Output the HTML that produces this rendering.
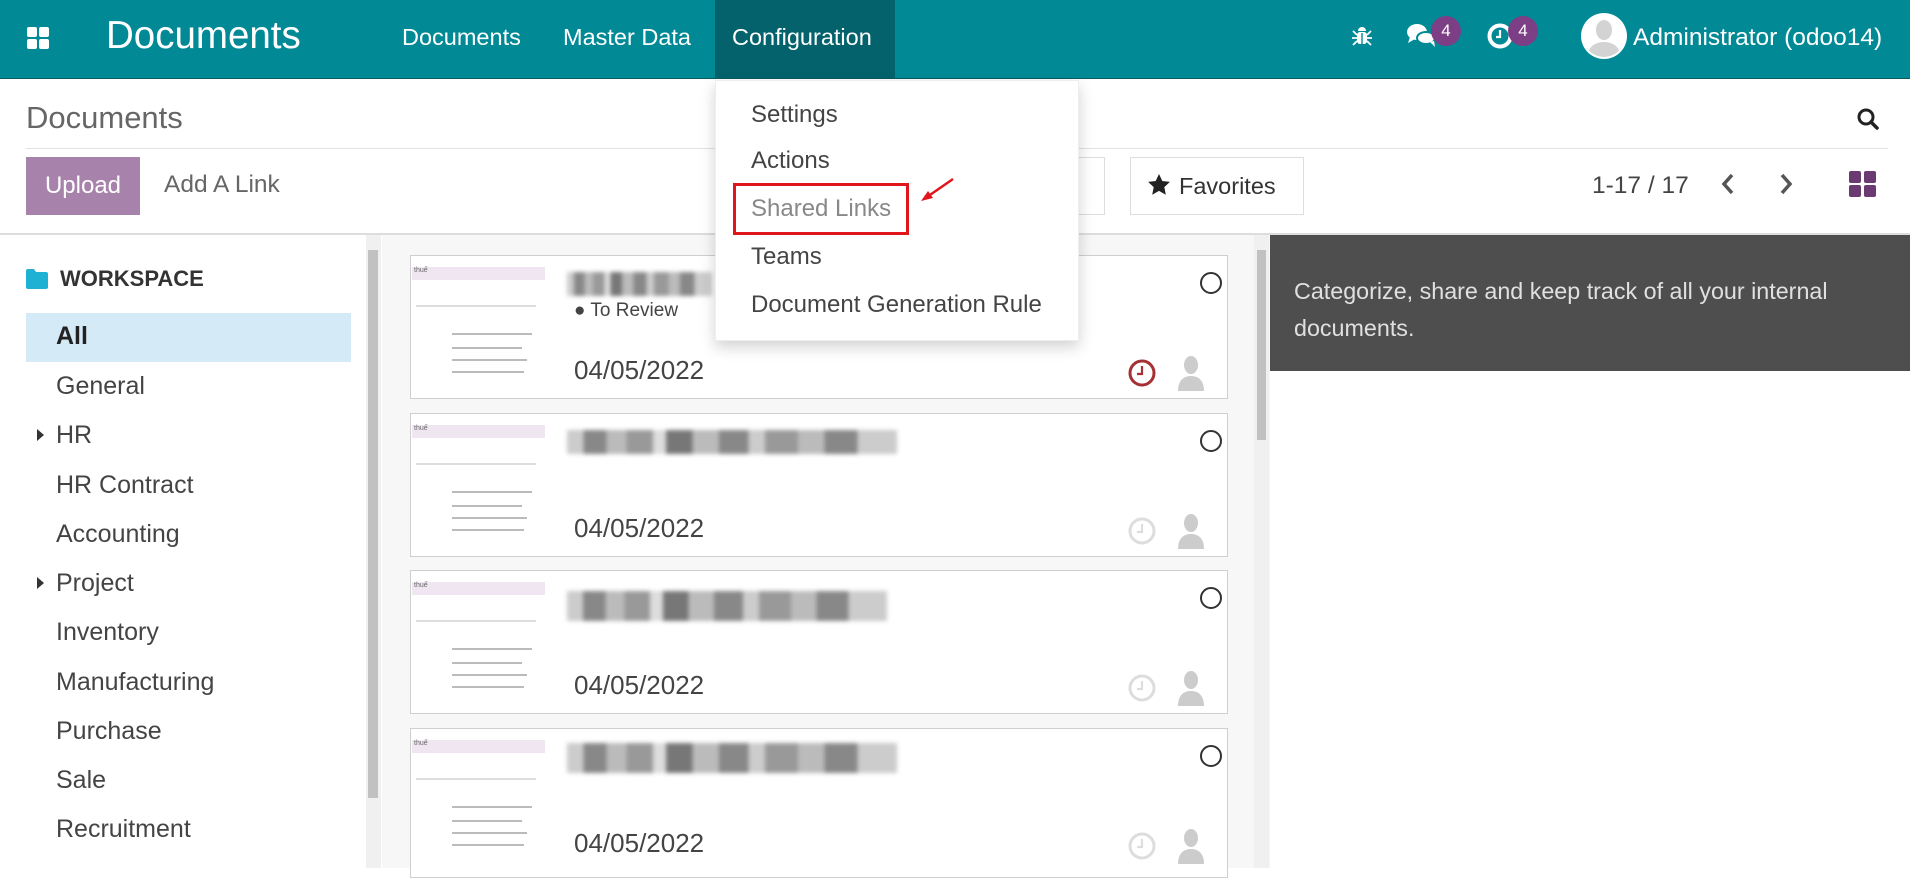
<!DOCTYPE html>
<html><head><meta charset="utf-8">
<style>
*{margin:0;padding:0;box-sizing:border-box}
body{width:1910px;height:868px;overflow:hidden;background:#fff;font-family:"Liberation Sans",sans-serif;position:relative;color:#4c4c4c}
.abs{position:absolute}
.nav{left:0;top:0;width:1910px;height:79px;background:#018a96;border-bottom:1px solid #0a5b62}
.navt{color:#fff;font-size:23.5px;top:24px;white-space:nowrap}
.badge{width:30px;height:30px;border-radius:50%;background:#7c3e84;color:#fff;font-size:17px;text-align:center;line-height:30px}
.side{font-size:25px;color:#444;left:56px;white-space:nowrap}
.card{left:410px;width:818px;height:144px;background:#fff;border:1px solid #cfcfcf;overflow:hidden}
.thumb{position:absolute;left:1px;top:1px;width:142px;height:140px;background:#fff}
.thumb .hd{position:absolute;left:0;top:10px;width:133px;height:13px;background:#efe6f2;font-size:7px;color:#666;padding-left:2px}
.thumb .ln{position:absolute;height:2px;background:#bbb}
.blur{position:absolute;left:156px;top:16px;height:24px;filter:blur(2px);background:linear-gradient(90deg,#ccc 0 5%,#888 5% 12%,#bbb 12% 18%,#999 18% 26%,#ddd 26% 30%,#777 30% 38%,#bbb 38% 46%,#888 46% 55%,#ccc 55% 60%,#999 60% 70%,#bbb 70% 78%,#888 78% 88%,#ccc 88% 100%)}
.date{position:absolute;left:163px;top:99px;font-size:26px;color:#444}
.circ{position:absolute;left:789px;top:16px;width:22px;height:22px;border:2px solid #333;border-radius:50%}
.dd{font-size:24px;color:#444;left:751px;white-space:nowrap}
</style></head><body>
<div class="abs nav"></div>
<svg class="abs" style="left:27px;top:27px" width="22" height="22"><rect x="0" y="0" width="10" height="10" rx="2" fill="#fff"/><rect x="12" y="0" width="10" height="10" rx="2" fill="#fff"/><rect x="0" y="12" width="10" height="10" rx="2" fill="#fff"/><rect x="12" y="12" width="10" height="10" rx="2" fill="#fff"/></svg>
<div class="abs" style="left:106px;top:14px;color:#fff;font-size:38.5px">Documents</div>
<div class="abs" style="left:715px;top:0;width:180px;height:78px;background:#03626b"></div>
<div class="abs navt" style="left:402px">Documents</div>
<div class="abs navt" style="left:563px">Master Data</div>
<div class="abs navt" style="left:732px">Configuration</div>
<svg class="abs" style="left:1350px;top:24px" width="24" height="24" viewBox="0 0 24 24" fill="#fff"><path d="M8 7a4 4 0 0 1 8 0z"/><rect x="7" y="8" width="10" height="12" rx="3"/><rect x="11.3" y="9" width="1.4" height="11" fill="#018a96"/><path d="M3 7l4 4M21 7l-4 4M2 14h5M22 14h-5M3 21l4-4M21 21l-4-4" stroke="#fff" stroke-width="1.8"/></svg>
<svg class="abs" style="left:1406px;top:22px" width="32" height="28" viewBox="0 0 32 28"><ellipse cx="11" cy="10" rx="10" ry="8" fill="#fff"/><path d="M4 15l-2 6 7-4z" fill="#fff"/><ellipse cx="20" cy="16" rx="9" ry="6" fill="#fff" stroke="#018a96" stroke-width="2"/><path d="M24 20l5 5-1-6z" fill="#fff"/></svg>
<div class="abs badge" style="left:1431px;top:16px">4</div>
<svg class="abs" style="left:1486px;top:22px" width="28" height="28" viewBox="0 0 28 28"><circle cx="14" cy="14" r="10.5" fill="none" stroke="#fff" stroke-width="4"/><path d="M14 8v7h-4" stroke="#fff" stroke-width="2.2" fill="none"/></svg>
<div class="abs badge" style="left:1508px;top:16px">4</div>
<svg class="abs" style="left:1581px;top:13px" width="46" height="46" viewBox="0 0 46 46"><circle cx="23" cy="23" r="23" fill="#fff"/><clipPath id="c"><circle cx="23" cy="23" r="21"/></clipPath><g clip-path="url(#c)" fill="#d3d3d3"><ellipse cx="23" cy="17" rx="8" ry="10"/><path d="M6 46c0-12 8-17 17-17s17 5 17 17z"/></g></svg>
<div class="abs navt" style="left:1633px;font-size:24.5px">Administrator (odoo14)</div>

<div class="abs" style="left:26px;top:100px;font-size:31px;color:#666">Documents</div>
<svg class="abs" style="left:1856px;top:107px" width="24" height="24" viewBox="0 0 24 24"><circle cx="10" cy="10" r="7" fill="none" stroke="#222" stroke-width="3"/><path d="M15 15l6 6" stroke="#222" stroke-width="3.5" stroke-linecap="round"/></svg>
<div class="abs" style="left:26px;top:148px;width:1862px;height:1px;background:#e2e2e2"></div>
<div class="abs" style="left:26px;top:157px;width:114px;height:58px;background:#a783ac;color:#fff;font-size:24px;line-height:58px;text-align:center">Upload</div>
<div class="abs" style="left:164px;top:171px;font-size:24.5px;color:#666">Add A Link</div>
<div class="abs" style="left:760px;top:157px;width:345px;height:58px;border:1px solid #ddd"></div>
<div class="abs" style="left:1130px;top:157px;width:174px;height:58px;border:1px solid #ddd;font-size:23.5px;color:#333;line-height:56px;padding-left:48px">Favorites</div>
<svg class="abs" style="left:1147px;top:173px" width="24" height="24" viewBox="0 0 24 24"><path d="M12 1l3.3 7 7.6.9-5.6 5.2 1.5 7.6L12 17.9 5.2 21.7l1.5-7.6L1.1 8.9 8.7 8z" fill="#222"/></svg>
<div class="abs" style="left:1592px;top:172px;font-size:24.5px;color:#444">1-17 / 17</div>
<svg class="abs" style="left:1718px;top:172px" width="80" height="24" viewBox="0 0 80 24"><path d="M14 3l-8 9 8 9M64 3l8 9-8 9" stroke="#555" stroke-width="3.5" fill="none"/></svg>
<svg class="abs" style="left:1849px;top:171px" width="27" height="26" viewBox="0 0 27 26" fill="#6b3a72"><rect width="12" height="12" rx="2"/><rect x="15" width="12" height="12" rx="2"/><rect y="14" width="12" height="12" rx="2"/><rect x="15" y="14" width="12" height="12" rx="2"/></svg>
<div class="abs" style="left:0;top:233px;width:1910px;height:2px;background:#ddd"></div>

<!-- sidebar -->
<svg class="abs" style="left:26px;top:269px" width="22" height="20" viewBox="0 0 22 20"><path d="M0 2a2 2 0 0 1 2-2h6l2 3h10a2 2 0 0 1 2 2v13a2 2 0 0 1-2 2H2a2 2 0 0 1-2-2z" fill="#1fb1d4"/></svg>
<div class="abs" style="left:60px;top:266px;font-size:22px;font-weight:bold;color:#333">WORKSPACE</div>
<div class="abs" style="left:26px;top:313px;width:325px;height:49px;background:#d4eaf7"></div>
<div class="abs side" style="top:322px;font-weight:bold;color:#222">All</div>
<div class="abs side" style="top:372px">General</div>
<div class="abs side" style="top:421px">HR</div>
<div class="abs side" style="top:471px">HR Contract</div>
<div class="abs side" style="top:520px">Accounting</div>
<div class="abs side" style="top:569px">Project</div>
<div class="abs side" style="top:618px">Inventory</div>
<div class="abs side" style="top:668px">Manufacturing</div>
<div class="abs side" style="top:717px">Purchase</div>
<div class="abs side" style="top:766px">Sale</div>
<div class="abs side" style="top:815px">Recruitment</div>
<svg class="abs" style="left:36px;top:428px" width="10" height="14"><path d="M1 1l7 6-7 6z" fill="#333"/></svg>
<svg class="abs" style="left:36px;top:576px" width="10" height="14"><path d="M1 1l7 6-7 6z" fill="#333"/></svg>
<div class="abs" style="left:366px;top:235px;width:15px;height:633px;background:#f0f0f0"></div>
<div class="abs" style="left:368px;top:250px;width:10px;height:548px;background:#c1c1c1"></div>

<!-- main -->
<div class="abs" style="left:382px;top:235px;width:888px;height:633px;background:#f7f7f7"></div>
<div class="abs" style="left:1254px;top:235px;width:15px;height:633px;background:#f0f0f0"></div>
<div class="abs" style="left:1257px;top:250px;width:9px;height:190px;background:#c1c1c1"></div>

<div class="abs card" style="top:255px"><div class="thumb"><div class="hd">thuế</div><div class="ln" style="left:4px;top:48px;width:120px;background:#ddd"></div><div class="ln" style="left:40px;top:76px;width:80px"></div><div class="ln" style="left:40px;top:90px;width:70px"></div><div class="ln" style="left:40px;top:102px;width:75px"></div><div class="ln" style="left:40px;top:114px;width:72px"></div></div><div class="blur" style="width:145px"></div><div style="position:absolute;left:163px;top:44px;font-size:19px;color:#444">● To Review</div><div class="date">04/05/2022</div><div class="circ"></div>
<svg style="position:absolute;left:716px;top:102px" width="30" height="30"><circle cx="15" cy="15" r="12" fill="none" stroke="#a63134" stroke-width="3"/><path d="M15 8v8h-5" stroke="#a63134" stroke-width="2.2" fill="none"/></svg>
<svg style="position:absolute;left:765px;top:99px" width="30" height="36" fill="#ccc"><ellipse cx="15" cy="10" rx="7" ry="9"/><path d="M2 36c0-10 5-15 13-15s13 5 13 15z"/></svg></div>

<div class="abs card" style="top:413px"><div class="thumb"><div class="hd">thuế</div><div class="ln" style="left:4px;top:48px;width:120px;background:#ddd"></div><div class="ln" style="left:40px;top:76px;width:80px"></div><div class="ln" style="left:40px;top:90px;width:70px"></div><div class="ln" style="left:40px;top:102px;width:75px"></div><div class="ln" style="left:40px;top:114px;width:72px"></div></div><div class="blur" style="width:330px"></div><div class="date">04/05/2022</div><div class="circ"></div>
<svg style="position:absolute;left:716px;top:102px" width="30" height="30"><circle cx="15" cy="15" r="12" fill="none" stroke="#ddd" stroke-width="3"/><path d="M15 8v8h-5" stroke="#ddd" stroke-width="2.2" fill="none"/></svg>
<svg style="position:absolute;left:765px;top:99px" width="30" height="36" fill="#ccc"><ellipse cx="15" cy="10" rx="7" ry="9"/><path d="M2 36c0-10 5-15 13-15s13 5 13 15z"/></svg></div>

<div class="abs card" style="top:570px"><div class="thumb"><div class="hd">thuế</div><div class="ln" style="left:4px;top:48px;width:120px;background:#ddd"></div><div class="ln" style="left:40px;top:76px;width:80px"></div><div class="ln" style="left:40px;top:90px;width:70px"></div><div class="ln" style="left:40px;top:102px;width:75px"></div><div class="ln" style="left:40px;top:114px;width:72px"></div></div><div class="blur" style="width:320px;top:20px;height:30px"></div><div class="date">04/05/2022</div><div class="circ"></div>
<svg style="position:absolute;left:716px;top:102px" width="30" height="30"><circle cx="15" cy="15" r="12" fill="none" stroke="#ddd" stroke-width="3"/><path d="M15 8v8h-5" stroke="#ddd" stroke-width="2.2" fill="none"/></svg>
<svg style="position:absolute;left:765px;top:99px" width="30" height="36" fill="#ccc"><ellipse cx="15" cy="10" rx="7" ry="9"/><path d="M2 36c0-10 5-15 13-15s13 5 13 15z"/></svg></div>

<div class="abs card" style="top:728px;height:150px"><div class="thumb"><div class="hd">thuế</div><div class="ln" style="left:4px;top:48px;width:120px;background:#ddd"></div><div class="ln" style="left:40px;top:76px;width:80px"></div><div class="ln" style="left:40px;top:90px;width:70px"></div><div class="ln" style="left:40px;top:102px;width:75px"></div><div class="ln" style="left:40px;top:114px;width:72px"></div></div><div class="blur" style="width:330px;top:14px;height:30px"></div><div class="date">04/05/2022</div><div class="circ"></div>
<svg style="position:absolute;left:716px;top:102px" width="30" height="30"><circle cx="15" cy="15" r="12" fill="none" stroke="#ddd" stroke-width="3"/><path d="M15 8v8h-5" stroke="#ddd" stroke-width="2.2" fill="none"/></svg>
<svg style="position:absolute;left:765px;top:99px" width="30" height="36" fill="#ccc"><ellipse cx="15" cy="10" rx="7" ry="9"/><path d="M2 36c0-10 5-15 13-15s13 5 13 15z"/></svg></div>

<!-- right panel -->
<div class="abs" style="left:1270px;top:235px;width:640px;height:136px;background:#4e4e4e"></div>
<div class="abs" style="left:1294px;top:273px;width:600px;font-size:23.3px;line-height:37px;color:#e0e0e0">Categorize, share and keep track of all your internal documents.</div>

<!-- dropdown -->
<div class="abs" style="left:715px;top:80px;width:364px;height:261px;background:#fff;box-shadow:0 6px 14px rgba(0,0,0,.18);border:1px solid #eee"></div>
<div class="abs dd" style="top:101px">Settings</div>
<div class="abs dd" style="top:147px">Actions</div>
<div class="abs dd" style="top:195px;color:#888">Shared Links</div>
<div class="abs dd" style="top:243px">Teams</div>
<div class="abs dd" style="top:291px">Document Generation Rule</div>
<div class="abs" style="left:733px;top:183px;width:176px;height:52px;border:3px solid #e0161c"></div>
<svg class="abs" style="left:915px;top:175px" width="42" height="30"><path d="M38 4L12 22" stroke="#e0161c" stroke-width="2.5"/><path d="M6 26l12-3-5-7z" fill="#e0161c"/></svg>
</body></html>
